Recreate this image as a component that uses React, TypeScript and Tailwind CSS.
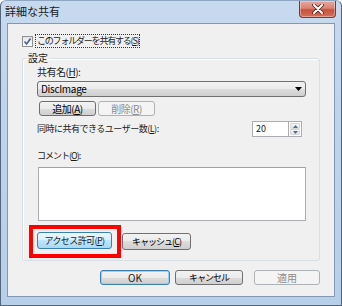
import React from "react";

const font = "font-['Noto_Sans_CJK_JP','Noto_Sans',sans-serif]";

const btn =
  "flex items-center justify-center rounded-[3px] border border-[#707070] bg-[linear-gradient(#f2f2f2,#ebebeb_50%,#dddddd_50%,#cfcfcf)] leading-none text-black";

function Mn({ k }: { k: string }) {
  return (
    <span>
      (<u>{k}</u>)
    </span>
  );
}

export default function App() {
  return (
    <div className={`w-[342px] h-[306px] bg-white ${font}`}>
      <div className="flex h-full w-full flex-col rounded-t-[6px] border border-[#55657a] border-t-[#8fa6c2] bg-[linear-gradient(#c6d9ef,#bed3ec_40%,#b8cfe9)]">
        {/* title bar */}
        <div className="flex h-[22px] items-start justify-between">
          <span className="pl-[4px] pt-[3px] text-[11px] leading-[14px] text-[#1a1a1a]">
            詳細な共有
          </span>
          <div className="mr-[5px] flex h-[17px] w-[37px] items-center justify-center rounded-b-[4px] border border-t-0 border-[#7a3a33] bg-[linear-gradient(#e6a99c,#d98372_45%,#c9503e_55%,#d5705a)] shadow-[inset_0_0_0_1px_rgba(255,255,255,0.35)]">
            <svg width="12" height="10" viewBox="0 0 12 10">
              <path
                d="M2 1 L10 9 M10 1 L2 9"
                stroke="#4a2520"
                strokeWidth="3.6"
                strokeLinecap="round"
              />
              <path
                d="M2 1 L10 9 M10 1 L2 9"
                stroke="#ffffff"
                strokeWidth="2"
                strokeLinecap="round"
              />
            </svg>
          </div>
        </div>

        {/* client area */}
        <div className="mx-[6px] mb-[8px] flex flex-1 flex-col border border-[#8398b3] bg-[#f0f0f0]">
          {/* checkbox row */}
          <div className="ml-[14px] mt-[10px] flex h-[14px] items-center">
            <div className="flex h-[11px] w-[11px] items-center justify-center border border-[#8e8f8f] bg-[linear-gradient(#e6e6e6,#ffffff)]">
              <svg width="9" height="9" viewBox="0 0 9 9">
                <path
                  d="M1.5 4.5 L3.6 7 L7.6 1.5"
                  fill="none"
                  stroke="#4a5f97"
                  strokeWidth="1.6"
                />
              </svg>
            </div>
            <span className="ml-[2px] border border-dotted border-[#333] px-[1px] text-[9px] leading-[12px] tracking-[-1.2px] text-[#1a1a1a]">
              このフォルダーを共有する<Mn k="S" />
            </span>
          </div>

          {/* group box */}
          <fieldset className="mx-[14px] mt-[3px] rounded-[3px] border border-[#d5dfe5] shadow-[inset_1px_1px_0_#fff]">
            <legend className="ml-[4px] px-[1px] text-[10px] leading-[14px] text-[#1a1a1a]">
              設定
            </legend>
            <div className="flex flex-col pl-[14px] pr-[13px] pb-[2px] text-[#1a1a1a]">
              <div className="h-[14px] text-[10px] leading-[14px] tracking-[-0.5px]">
                共有名<Mn k="H" />:
              </div>
              <div
                className={`mt-[2px] h-[16px] justify-between! px-[3px] ${btn}`}
              >
                <span className="text-[10px] tracking-[-0.3px]">DiscImage</span>
                <svg width="7" height="4" viewBox="0 0 7 4">
                  <path d="M0 0 H7 L3.5 4 Z" fill="#000" />
                </svg>
              </div>
              <div className="ml-[2px] mt-[4px] flex gap-[2px]">
                <div className={`h-[15px] w-[57px] text-[10px] tracking-[-0.5px] ${btn}`}>
                  追加<Mn k="A" />
                </div>
                <div className="flex h-[15px] w-[57px] items-center justify-center rounded-[3px] border border-[#adb2b5] bg-[#f4f4f4] text-[10px] leading-none tracking-[-0.5px] text-[#8a8a8a]">
                  削除<Mn k="R" />
                </div>
              </div>
              <div className="mt-[5px] flex h-[16px] items-center justify-between">
                <span className="text-[9px] leading-[14px] tracking-[-0.5px]">
                  同時に共有できるユーザー数<Mn k="L" />:
                </span>
                <div className="mr-[4px] flex h-[16px]">
                  <div className="flex w-[37px] items-center border border-[#abadb3] bg-white pl-[3px] text-[9px]">
                    20
                  </div>
                  <div className="flex w-[13px] flex-col border border-l-0 border-[#abadb3] bg-white p-[1px]">
                    <div className="flex flex-1 items-center justify-center rounded-[1px] border border-[#d8d8d8] bg-[linear-gradient(#f6f6f6,#e4e4e4)]">
                      <svg width="5" height="3" viewBox="0 0 5 3">
                        <path d="M0 3 H5 L2.5 0 Z" fill="#4d6e9a" />
                      </svg>
                    </div>
                    <div className="flex flex-1 items-center justify-center rounded-[1px] border border-[#d8d8d8] bg-[linear-gradient(#f6f6f6,#e4e4e4)]">
                      <svg width="5" height="3" viewBox="0 0 5 3">
                        <path d="M0 0 H5 L2.5 3 Z" fill="#4d6e9a" />
                      </svg>
                    </div>
                  </div>
                </div>
              </div>
              <div className="mt-[12px] h-[14px] text-[9px] leading-[14px] tracking-[-1px]">
                コメント<Mn k="O" />:
              </div>
              <div className="ml-[1px] mt-[4px] h-[54px] border border-[#abadb3] border-t-[#a0a0a0] bg-white" />
              <div className="-ml-[8px] mt-[4px] flex items-center">
                <div className="w-[92px] border-4 border-[#ff0000] pb-[5px] pl-[4px] pt-[3px]">
                  <div className="flex h-[17px] w-[75px] items-center justify-center rounded-[3px] border border-[#3c7fb1] bg-[linear-gradient(#eaf6fd,#d9f0fc_50%,#bee6fd_50%,#a7d9f5)] text-[9px] leading-none tracking-[-0.6px]">
                    アクセス許可<Mn k="P" />
                  </div>
                </div>
                <div className={`ml-[1px] h-[17px] w-[69px] text-[9px] tracking-[-1px] ${btn}`}>
                  キャッシュ<Mn k="C" />
                </div>
              </div>
            </div>
          </fieldset>

          {/* dialog buttons */}
          <div className="mr-[14px] mt-[9px] flex justify-end">
            <div className="flex h-[15px] w-[70px] items-center justify-center rounded-[3px] border border-[#3c7fb1] bg-[linear-gradient(#f2f2f2,#ebebeb_50%,#dddddd_50%,#cfcfcf)] shadow-[inset_0_0_0_1px_#8fd3f5] text-[10px] leading-none text-[#1a1a1a]">
              OK
            </div>
            <div className={`ml-[5px] h-[15px] w-[68px] text-[9px] tracking-[-1px] ${btn}`}>
              キャンセル
            </div>
            <div className="ml-[11px] flex h-[15px] w-[66px] items-center justify-center rounded-[3px] border border-[#adb2b5] bg-[#f4f4f4] text-[10px] leading-none text-[#8a8a8a]">
              適用
            </div>
          </div>
        </div>
      </div>
    </div>
  );
}
